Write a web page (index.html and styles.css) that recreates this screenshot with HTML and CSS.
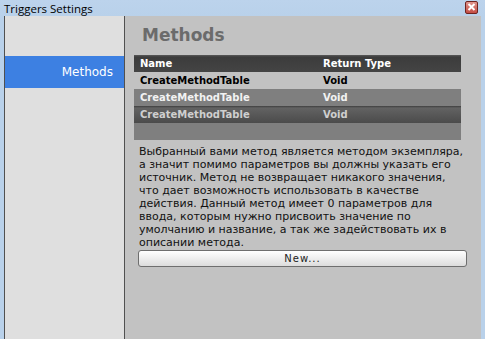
FILE: index.html
```html
<!DOCTYPE html>
<html lang="ru">
<head>
    <meta charset="UTF-8">
    <title>Triggers Settings</title>
    <link rel="stylesheet" href="styles.css">
</head>
<body>

<div id="window">
    <div id="titleBar">
        <span class="titleText">Triggers Settings</span>
        <span class="closeButton">
            <svg width="9" height="8" viewBox="0 0 9 8">
                <path d="M1.5 1 L7.5 7 M7.5 1 L1.5 7" stroke="#ffffff" stroke-width="2"/>
            </svg>
        </span>
    </div>

    <div id="frame">
        <div id="sidebar">
            <div class="navItem selected">Methods</div>
        </div>

        <div id="content">
            <div class="heading">Methods</div>

            <table class="methodTable">
                <tr class="headRow">
                    <td class="nameCol">Name</td>
                    <td>Return Type</td>
                </tr>
                <tr class="row plain">
                    <td class="nameCol">CreateMethodTable</td>
                    <td>Void</td>
                </tr>
                <tr class="row light">
                    <td class="nameCol">CreateMethodTable</td>
                    <td>Void</td>
                </tr>
                <tr class="row dark">
                    <td class="nameCol">CreateMethodTable</td>
                    <td>Void</td>
                </tr>
                <tr class="row empty">
                    <td colspan="2"></td>
                </tr>
            </table>

            <p class="description">
                Выбранный вами метод является методом экземпляра,<br>
                а значит помимо параметров вы должны указать его<br>
                источник. Метод не возвращает никакого значения,<br>
                что дает возможность использовать в качестве<br>
                действия. Данный метод имеет 0 параметров для<br>
                ввода, которым нужно присвоить значение по<br>
                умолчанию и название, а так же задействовать их в<br>
                описании метода.
            </p>

            <button class="newButton">New...</button>
        </div>
    </div>
</div>

</body>
</html>
```

FILE: styles.css
```css
html, body {
    height: 100%;
}
body {
    margin: 0;
    background-color: #b9d1ea;
    font-family: "DejaVu Sans", Verdana, sans-serif;
    overflow: hidden;
}
#window {
    display: flex;
    flex-direction: column;
    height: 100%;
}
#titleBar {
    height: 16px;
    display: flex;
    align-items: center;
    justify-content: space-between;
    padding: 0 7px 0 4px;
    background: linear-gradient(#bcd3ec, #b9d1ea);
}
.titleText {
    font-family: "Open Sans", "Liberation Sans", Arial, sans-serif;
    font-size: 11.5px;
    color: #000000;
    margin-top: 1px;
}
.closeButton {
    width: 11px;
    height: 11px;
    display: flex;
    align-items: center;
    justify-content: center;
    border: 1px solid #6f2420;
    border-radius: 2px;
    background: linear-gradient(#e0958d, #c44c43);
    margin-top: -2px;
}
#frame {
    flex: 1;
    display: flex;
    padding: 0 4px;
}
#sidebar {
    flex-shrink: 0;
    width: 119px;
    background-color: #dfdfdf;
    border-left: 1px solid #505050;
    border-right: 1px solid #505050;
    padding-top: 40px;
}
.navItem {
    height: 32px;
    line-height: 32px;
    text-align: right;
    padding-right: 11px;
    font-size: 12px;
    color: #ffffff;
}
.navItem.selected {
    background-color: #3d80e2;
}
#content {
    flex: 1;
    min-width: 0;
    background-color: #c2c2c2;
    padding: 8px 20px 0 9px;
}
.heading {
    font-size: 17px;
    font-weight: bold;
    line-height: 22px;
    color: #6b6b6b;
    padding-left: 8px;
}
.methodTable {
    width: 100%;
    margin-top: 9px;
    border-collapse: collapse;
    font-size: 10px;
    font-weight: bold;
}
.methodTable td {
    height: 17px;
    padding: 0 0 0 6px;
}
.methodTable .nameCol {
    width: 177px;
}
.headRow {
    background: linear-gradient(#5a5a5a 0, #3c3c3c 2px, #444444 100%);
    color: #ffffff;
}
.row.plain {
    color: #000000;
}
.row.light {
    background-color: #7f7f7f;
    color: #f2f2f2;
}
.row.dark {
    background: linear-gradient(#3f3f3f 0, #626262 2px, #4b4b4b 100%);
    color: #cfcfcf;
}
.row.empty {
    background-color: #7f7f7f;
}
.description {
    margin: 5px 0 0 5px;
    font-size: 11px;
    line-height: 13px;
    color: #111111;
    white-space: nowrap;
}
.newButton {
    display: block;
    width: 329px;
    height: 17px;
    margin: 1px 0 0 4px;
    padding: 0;
    border: 1px solid #6e6e6e;
    border-radius: 3px;
    background: linear-gradient(#ffffff, #dcdcdc);
    font-family: "DejaVu Sans", Verdana, sans-serif;
    font-size: 10px;
    color: #222222;
    letter-spacing: 1px;
}
```
